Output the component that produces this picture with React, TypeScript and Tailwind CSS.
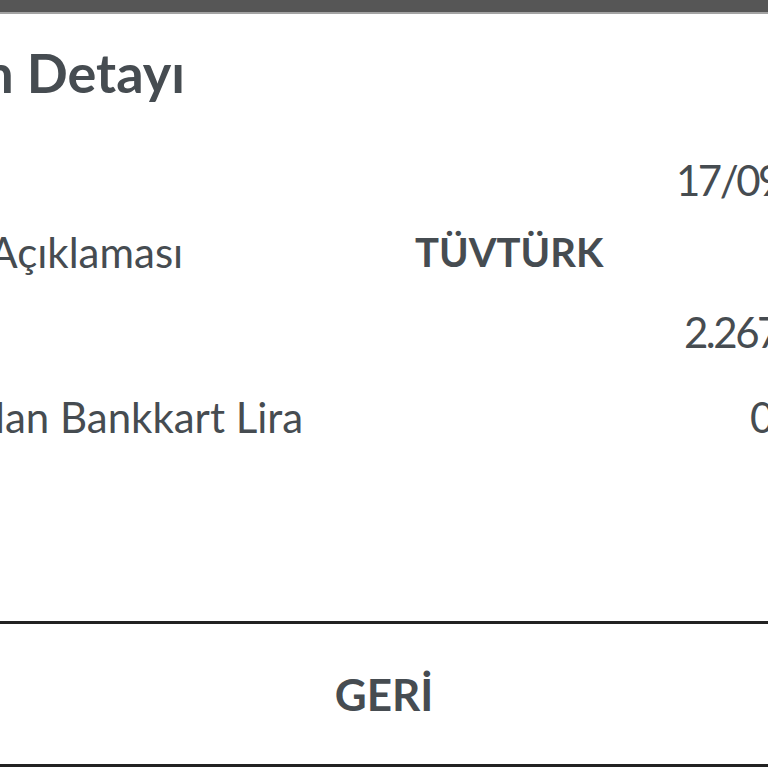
import React from 'react';

const rows = [
  { label: 'Tarih', value: '17/09/2019', bold: false, h: 'h-[74px]', shift: 'ml-0', pad: 'pl-[780px]' },
  { label: 'İşlem Açıklaması', value: 'TÜVTÜRK', bold: true, h: 'h-[70px]', shift: '-ml-[12px]', pad: 'pl-[519px]' },
  { label: 'Tutar', value: '2.267,00 TL', bold: false, h: 'h-[89px]', shift: 'ml-0', pad: 'pl-[788px]' },
  { label: 'Kazanılan Bankkart Lira', value: '0,00', bold: false, h: 'h-[82px]', shift: '-ml-[23px]', pad: 'pl-[854px]' },
];

const App: React.FC = () => {
  return (
    <div className="w-[768px] h-[768px] overflow-hidden bg-white flex flex-col text-[#464c51] font-['Lato',sans-serif]">
      <div className="h-[14px] shrink-0 bg-[#565656] border-b-2 border-[#a3a3a3]" />

      <div className="-ml-[104px] w-[1100px] flex flex-col flex-1">
        <h1 className="-ml-[53px] pt-[32px] pb-[43px] text-[54px] leading-[54px] font-bold">İşlemin Detayı</h1>

        <div className="flex flex-col">
          {rows.map(row => (
            <div key={row.label} className={`${row.h} relative flex items-center text-[42px] leading-[42px]`}>
              <span className={`absolute left-0 ${row.shift} whitespace-nowrap`}>{row.label}</span>
              <span
                className={`${row.pad} whitespace-nowrap ${row.bold ? 'font-bold text-[40px]' : 'tracking-[-2.5px]'}`}
              >
                {row.value}
              </span>
            </div>
          ))}
        </div>
      </div>

      <div className="h-[146px] shrink-0 border-t-[3px] border-b-[3px] border-[#222] flex items-center justify-center mb-[1px]">
        <button className="text-[44px] leading-[44px] font-bold text-[#464c51]">GERİ</button>
      </div>
    </div>
  );
};

export default App;
